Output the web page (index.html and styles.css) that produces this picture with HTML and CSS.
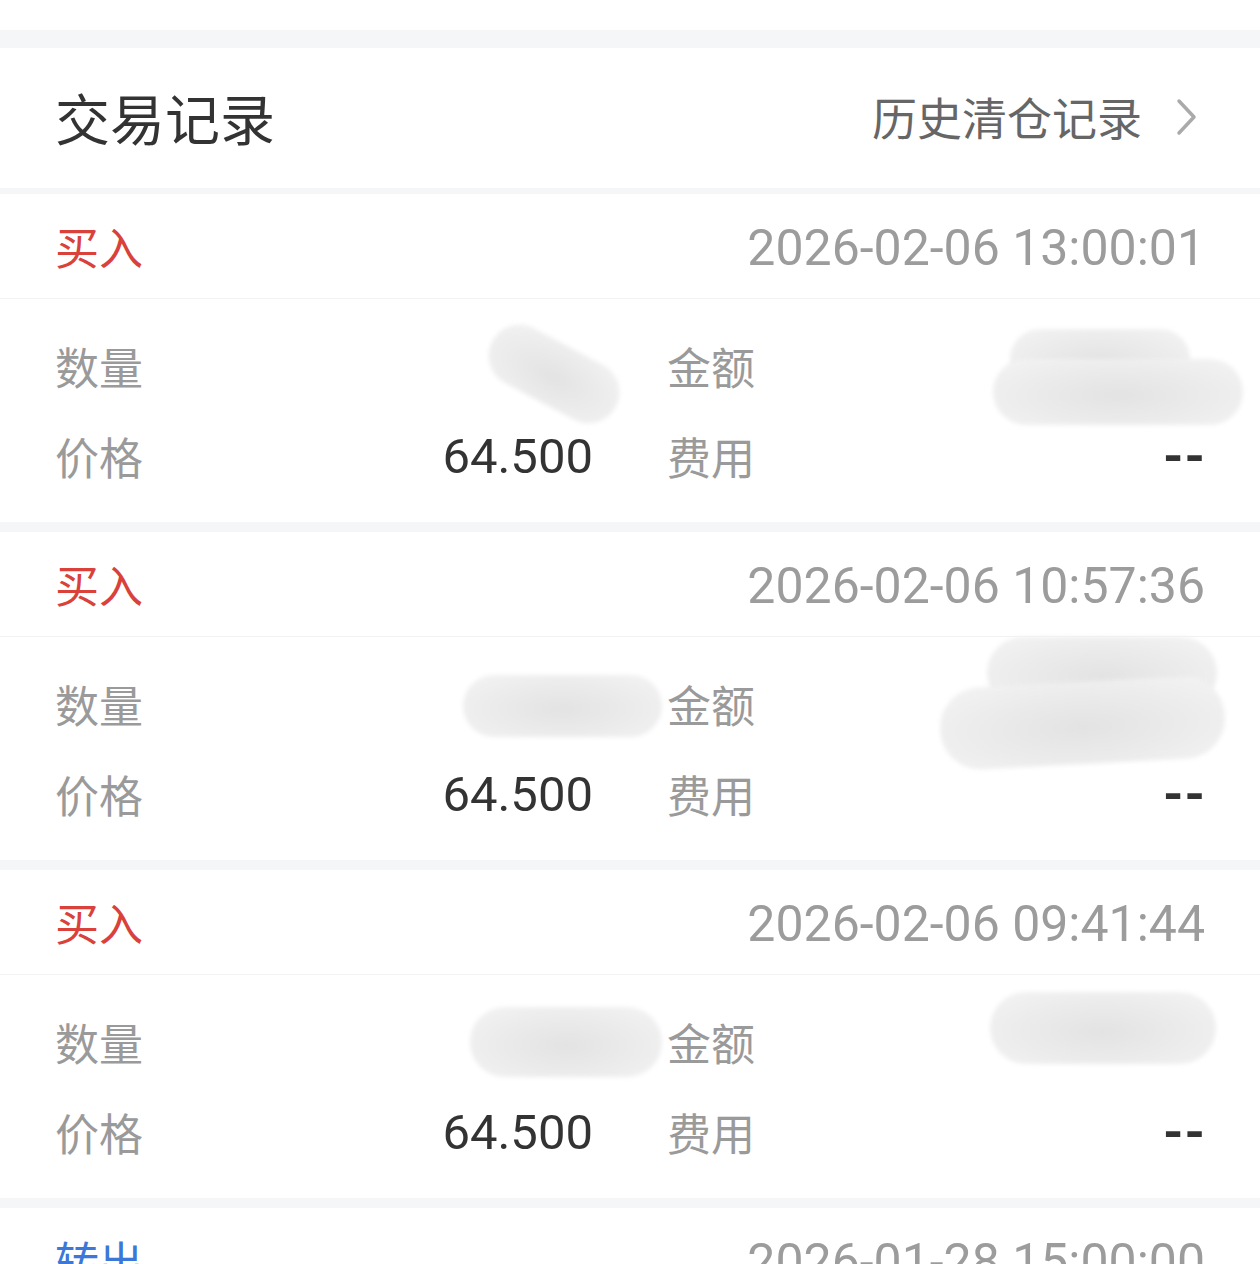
FILE: index.html
```html
<!DOCTYPE html>
<html lang="zh-CN">
<head>
<meta charset="utf-8">
<title>交易记录</title>
<link rel="stylesheet" href="styles.css">
</head>
<body>
<div class="page">
  <div class="top-space"></div>
  <div class="gap gap-lg"></div>
  <div class="section-head">
    <div class="title">交易记录</div>
    <div class="link">历史清仓记录
      <svg class="chev" width="22" height="38" viewBox="0 0 22 38"><path d="M3 3 L18 19 L3 35" fill="none" stroke="#aaa" stroke-width="3.5" stroke-linecap="round" stroke-linejoin="round"/></svg>
    </div>
  </div>
  <div class="gap gap-sm"></div>

  <div class="record">
    <div class="rec-head"><span class="type buy">买入</span><span class="time">2026-02-06 13:00:01</span></div>
    <div class="rec-body">
      <div class="cell"><span class="lbl">数量</span><span class="val"></span></div>
      <div class="cell"><span class="lbl">金额</span><span class="val"></span></div>
      <div class="cell"><span class="lbl">价格</span><span class="val">64.500</span></div>
      <div class="cell"><span class="lbl">费用</span><span class="val dash">--</span></div>
      <div class="smudge s1a"></div>
      <div class="smudge s1b"></div>
      <div class="smudge s1c"></div>
    </div>
  </div>
  <div class="gap gap-md"></div>

  <div class="record">
    <div class="rec-head"><span class="type buy">买入</span><span class="time">2026-02-06 10:57:36</span></div>
    <div class="rec-body">
      <div class="cell"><span class="lbl">数量</span><span class="val"></span></div>
      <div class="cell"><span class="lbl">金额</span><span class="val"></span></div>
      <div class="cell"><span class="lbl">价格</span><span class="val">64.500</span></div>
      <div class="cell"><span class="lbl">费用</span><span class="val dash">--</span></div>
      <div class="smudge s2a"></div>
      <div class="smudge s2b"></div>
      <div class="smudge s2c"></div>
    </div>
  </div>
  <div class="gap gap-md"></div>

  <div class="record">
    <div class="rec-head"><span class="type buy">买入</span><span class="time">2026-02-06 09:41:44</span></div>
    <div class="rec-body">
      <div class="cell"><span class="lbl">数量</span><span class="val"></span></div>
      <div class="cell"><span class="lbl">金额</span><span class="val"></span></div>
      <div class="cell"><span class="lbl">价格</span><span class="val">64.500</span></div>
      <div class="cell"><span class="lbl">费用</span><span class="val dash">--</span></div>
      <div class="smudge s3a"></div>
      <div class="smudge s3b"></div>
    </div>
  </div>
  <div class="gap gap-md"></div>

  <div class="record">
    <div class="rec-head"><span class="type out">转出</span><span class="time">2026-01-28 15:00:00</span></div>
  </div>
</div>
</body>
</html>
```
FILE: styles.css
```css
* { box-sizing: border-box; }
html, body { margin: 0; padding: 0; background: #fff; }
body {
  font-family: Roboto, "Noto Sans CJK SC", "Noto Sans", sans-serif;
  width: 1260px;
  height: 1264px;
  overflow: hidden;
}
.page { display: flex; flex-direction: column; }
.top-space { height: 30px; background: #fff; }
.gap { background: #f5f6f8; }
.gap-lg { height: 18px; }
.gap-sm { height: 6px; }
.gap-md { height: 10px; }

.section-head {
  height: 140px;
  display: flex;
  align-items: center;
  justify-content: space-between;
  padding: 0 62px 4px 55px;
}
.title { font-size: 55px; color: #333; }
.link {
  display: flex;
  align-items: center;
  gap: 34px;
  font-size: 45px;
  color: #666;
}
.chev { display: block; margin-top: 2px; }

.rec-head {
  height: 105px;
  display: flex;
  align-items: center;
  justify-content: space-between;
  padding: 0 55px;
  border-bottom: 1px solid #f2f2f2;
}
.type { font-size: 44px; }
.buy { color: #d9413a; }
.out { color: #3b78d8; }
.time { font-size: 50px; color: #9c9c9c; letter-spacing: 0; margin-top: 4px; }

.rec-body {
  position: relative;
  display: grid;
  grid-template-columns: 1fr 1fr;
  column-gap: 74px;
  padding: 22px 55px 21px;
}
.cell {
  height: 90px;
  display: flex;
  align-items: center;
  justify-content: space-between;
}
.lbl { font-size: 44px; color: #9a9a9a; }
.val { font-size: 49px; color: #333; }
.dash { font-weight: 700; font-size: 52px; letter-spacing: 1px; margin-right: -1px; }

.smudge {
  position: absolute;
  border-radius: 40px;
  background: radial-gradient(ellipse at 50% 55%, #e3e3e3 0%, #ececec 55%, #f4f4f4 100%);
  filter: blur(2px);
}
/* record 1 (body starts at y=298) */
.s1a { left: 484px; top: 44px; width: 140px; height: 62px; transform: rotate(28deg); border-radius: 34px; }
.s1b { left: 1010px; top: 30px; width: 180px; height: 60px; }
.s1c { left: 993px; top: 60px; width: 250px; height: 66px; }
/* record 2 (body starts at y=638) */
.s2a { left: 463px; top: 38px; width: 199px; height: 62px; }
.s2b { left: 987px; top: 0px; width: 230px; height: 72px; }
.s2c { left: 940px; top: 45px; width: 285px; height: 82px; transform: rotate(-3deg); }
/* record 3 (body starts at y=976) */
.s3a { left: 470px; top: 32px; width: 192px; height: 70px; }
.s3b { left: 990px; top: 17px; width: 226px; height: 72px; }
```
